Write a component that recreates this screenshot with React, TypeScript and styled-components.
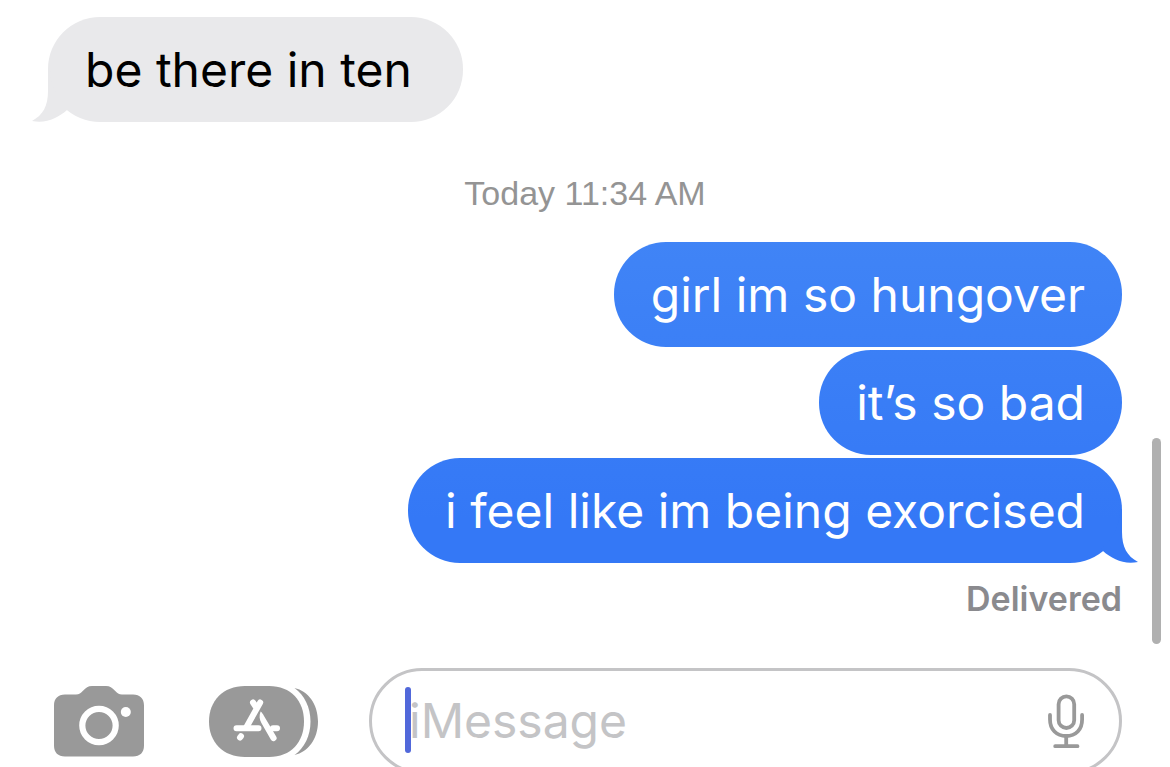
import React from "react";
import styled, { createGlobalStyle } from "styled-components";

const GlobalStyle = createGlobalStyle`
  *, *::before, *::after { box-sizing: border-box; }
  body {
    margin: 0;
    background: #fff;
    font-family: Inter, "Liberation Sans", sans-serif;
  }
`;

const Screen = styled.div`
  position: relative;
  display: flex;
  flex-direction: column;
  height: 100vh;
  overflow: hidden;
`;

const Conversation = styled.main`
  display: flex;
  flex-direction: column;
  gap: 3px;
  padding: 17px 48px 0;
`;

const Bubble = styled.p<{ $sent?: boolean }>`
  position: relative;
  align-self: ${(p) => (p.$sent ? "flex-end" : "flex-start")};
  margin: 0;
  padding: ${(p) => (p.$sent ? "23px 37px 22px" : "23px 51px 22px 37px")};
  border-radius: 52px;
  font-size: 48px;
  line-height: 60px;
  color: ${(p) => (p.$sent ? "#fff" : "#000")};
  background: ${(p) =>
    p.$sent
      ? "linear-gradient(#4a8cf7 0, #4084f6 240px, #3478f6 520px) fixed"
      : "#e9e9eb"};
`;

const Tail = styled.svg<{ $sent?: boolean }>`
  position: absolute;
  bottom: 0;
  ${(p) => (p.$sent ? "right: -16px; transform: scaleX(-1);" : "left: -16px;")}
  fill: ${(p) => (p.$sent ? "#3478f6" : "#e9e9eb")};
`;

const Timestamp = styled.time`
  align-self: center;
  margin: 48px 0 25px;
  font-family: "Liberation Sans", Arial, sans-serif;
  font-size: 34px;
  line-height: 41px;
  color: #949494;
`;

const Receipt = styled.p`
  align-self: flex-end;
  margin: 12px 0 0;
  font-size: 34px;
  font-weight: 600;
  line-height: 41px;
  color: #8a8a8e;
`;

const ScrollThumb = styled.div`
  position: absolute;
  top: 438px;
  right: 9px;
  width: 9px;
  height: 206px;
  border-radius: 5px;
  background: #b0b0b0;
`;

const Composer = styled.form`
  display: flex;
  align-items: center;
  flex-shrink: 0;
  margin-top: 49px;
  padding: 0 48px 0 54px;
`;

const IconButton = styled.button<{ $gap?: number }>`
  display: flex;
  flex-shrink: 0;
  margin: 0 ${(p) => p.$gap ?? 0}px 0 0;
  padding: 0;
  border: 0;
  background: none;
  color: #999;
`;

const Field = styled.label`
  position: relative;
  display: flex;
  align-items: center;
  flex: 1;
  min-width: 0;
  height: 106px;
  padding: 0 35px 0 37px;
  border: 3px solid #c4c4c6;
  border-radius: 53px;
`;

const MessageInput = styled.input`
  flex: 1;
  min-width: 0;
  padding: 0;
  border: 0;
  outline: 0;
  background: none;
  font: inherit;
  font-size: 48px;
  line-height: 60px;
  color: #000;
  &::placeholder {
    color: #c4c4c6;
    opacity: 1;
  }
`;

const Caret = styled.span`
  position: absolute;
  left: 33px;
  top: 16px;
  width: 6px;
  height: 66px;
  border-radius: 3px;
  background: #5168da;
`;

function BubbleTail({ sent }: { sent?: boolean }) {
  return (
    <Tail $sent={sent} width="40" height="53" viewBox="0 0 40 53" aria-hidden="true">
      <path d="M16 0V22C16 37 11 46 0 52C14 55 26 49 35 41L37 39A52 52 0 0 1 18 0Z" />
    </Tail>
  );
}

function CameraIcon() {
  return (
    <svg width="90" height="71" viewBox="0 0 90 71" aria-hidden="true">
      <path
        fill="currentColor"
        d="M11 8.500H22C25 8.500 27 7 29 4.800C32 1.500 34 0 38 0H52C56 0 58 1.500 61 4.800C63 7 65 8.500 68 8.500H79C86 8.500 90 12.500 90 19.500V59.500C90 66.500 86 70.500 79 70.500H11C4 70.500 0 66.500 0 59.500V19.500C0 12.500 4 8.500 11 8.500Z"
      />
      <circle cx="45" cy="39.500" r="16.700" fill="none" stroke="#fff" strokeWidth="6.200" />
      <circle cx="71.800" cy="26" r="5" fill="#fff" />
    </svg>
  );
}

function AppsIcon() {
  return (
    <svg width="110" height="71" viewBox="0 0 110 71" aria-hidden="true">
      <path
        fill="currentColor"
        d="M36 0H60C82 0 95 15 95 35.500S82 71 60 71H36C14 71 0 56 0 35.500S14 0 36 0Z"
      />
      <path
        fill="currentColor"
        d="M85.500 2C99 5 109 18 109 35.500S99 66 85.500 69C95.500 62 101.500 49.500 101.500 35.500S95.500 9 85.500 2Z"
      />
      <g fill="none" stroke="#fff" strokeWidth="6" strokeLinecap="round">
        <path d="M44 16.500L47.600 22M51.200 16.500L37.500 41" />
        <path d="M27.500 42.300H49.500M64 42.300H68" />
        <path d="M32 50.200L31 51.600" />
      </g>
      <path
        fill="#fff"
        d="M51.600 25.500C50 29.500 50.400 33.500 52.400 37L61.800 53.500A3 3 0 0 0 67.200 50.500L55 30C54 28 53 26.500 51.600 25.500Z"
      />
    </svg>
  );
}

function MicIcon() {
  return (
    <svg
      width="36"
      height="55"
      viewBox="0 0 36 55"
      fill="none"
      stroke="currentColor"
      strokeWidth="3.800"
      strokeLinecap="round"
      aria-hidden="true"
    >
      <rect x="10.600" y="2.400" width="15.600" height="31.600" rx="7.800" />
      <path d="M2 21V25.500C2 35.500 8.500 42 18.200 42S34.100 35.500 34.100 25.500V21" />
      <path d="M18.200 42V52.200M7.200 52.200H29.500" />
    </svg>
  );
}

export default function App() {
  return (
    <>
      <GlobalStyle />
      <Screen>
        <Conversation>
          <Bubble>
            be there in ten
            <BubbleTail />
          </Bubble>
          <Timestamp>Today 11:34 AM</Timestamp>
          <Bubble $sent>girl im so hungover</Bubble>
          <Bubble $sent>it’s so bad</Bubble>
          <Bubble $sent>
            i feel like im being exorcised
            <BubbleTail sent />
          </Bubble>
          <Receipt>Delivered</Receipt>
        </Conversation>
        <Composer onSubmit={(e) => e.preventDefault()}>
          <IconButton type="button" aria-label="Camera" $gap={65}>
            <CameraIcon />
          </IconButton>
          <IconButton type="button" aria-label="Apps" $gap={50}>
            <AppsIcon />
          </IconButton>
          <Field>
            <MessageInput type="text" placeholder="iMessage" aria-label="iMessage" />
            <Caret />
            <IconButton type="button" aria-label="Dictate">
              <MicIcon />
            </IconButton>
          </Field>
        </Composer>
        <ScrollThumb />
      </Screen>
    </>
  );
}
